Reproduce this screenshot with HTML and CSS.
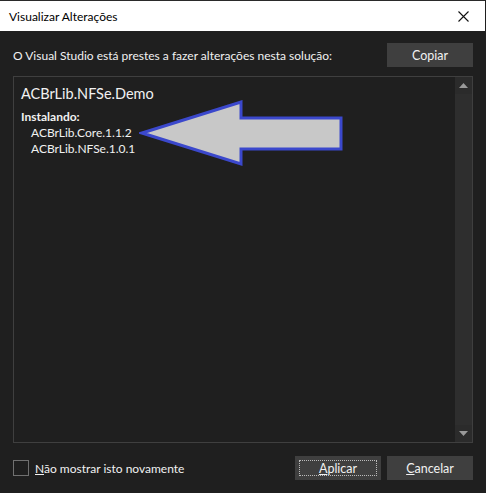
FILE: index.html
```html
<!DOCTYPE html>
<html>
<head>
<meta charset="utf-8">
<link rel="stylesheet" href="styles.css">
</head>
<body>
<div class="window">
  <div class="titlebar">
    <span class="title">Visualizar Alterações</span>
    <svg class="close" width="11" height="11" viewBox="0 0 11 11"><path d="M0.5 0.5 L10.5 10.5 M10.5 0.5 L0.5 10.5" stroke="#111" stroke-width="1.1" fill="none"/></svg>
  </div>
  <div class="content">
    <div class="header">
      <span class="label">O Visual Studio está prestes a fazer alterações nesta solução:</span>
      <button class="btn">Copiar</button>
    </div>
    <div class="listbox">
      <div class="listtext">
        <div class="project">ACBrLib.NFSe.Demo</div>
        <div class="section">Instalando:</div>
        <div class="item">ACBrLib.Core.1.1.2</div>
        <div class="item">ACBrLib.NFSe.1.0.1</div>
      </div>
      <div class="scrollbar">
        <div class="sbtn"><svg width="9" height="5" viewBox="0 0 9 5"><path d="M0 5 L4.5 0 L9 5 Z" fill="#999"/></svg></div>
        <div class="track"></div>
        <div class="sbtn"><svg width="9" height="5" viewBox="0 0 9 5"><path d="M0 0 L9 0 L4.5 5 Z" fill="#999"/></svg></div>
      </div>
      <svg class="arrow" width="206" height="68" viewBox="0 0 206 68">
        <polygon points="3,33 102,2 102,18 202,18 202,49 102,49 102,64" fill="#c8c8c8" stroke="#3b48cc" stroke-width="3" stroke-linejoin="miter"/>
      </svg>
    </div>
    <div class="footer">
      <label class="check"><span class="box"></span><span><u>N</u>ão mostrar isto novamente</span></label>
      <div class="buttons">
        <button class="btn focused"><span class="focusring"><u>A</u>plicar</span></button>
        <button class="btn"><u>C</u>ancelar</button>
      </div>
    </div>
  </div>
</div>
</body>
</html>
```

FILE: styles.css
```css
html, body {
  margin: 0;
  padding: 0;
  background: #1f1f1f;
}
body {
  width: 486px;
  height: 493px;
  overflow: hidden;
  font-family: "Lato", "Noto Sans", sans-serif;
  font-size: 12px;
  color: #f1f1f1;
}
.window {
  width: 485px;
  height: 493px;
  border-top: 1px solid #2a2a2a;
  box-sizing: border-box;
  display: flex;
  flex-direction: column;
}
.titlebar {
  height: 30px;
  background: #ffffff;
  color: #000;
  display: flex;
  align-items: center;
  justify-content: space-between;
  padding: 0 16px 0 9px;
  flex: none;
}
.title {
  font-size: 12px;
}
.close {
  display: block;
}
.content {
  flex: 1;
  display: flex;
  flex-direction: column;
  padding: 12px 12px 0 13px;
}
.header {
  display: flex;
  align-items: center;
  justify-content: space-between;
  height: 24px;
}
.label {
  font-size: 12px;
}
.btn {
  width: 86px;
  height: 24px;
  background: #3f3f3f;
  border: none;
  color: #f1f1f1;
  font-family: inherit;
  font-size: 12.5px;
  padding: 0;
  display: flex;
  align-items: center;
  justify-content: center;
}
.listbox {
  margin-top: 9px;
  height: 367px;
  border: 1px solid #3f3f3f;
  box-sizing: border-box;
  display: flex;
  position: relative;
}
.listtext {
  flex: 1;
  padding: 7px 0 0 7px;
}
.project {
  font-size: 14.5px;
  line-height: 20px;
}
.section {
  font-weight: bold;
  margin-top: 5px;
  font-size: 12px;
  line-height: 16px;
}
.item {
  padding-left: 10px;
  font-size: 12px;
  line-height: 15.5px;
}
.scrollbar {
  width: 17px;
  background: #2e2e2e;
  display: flex;
  flex-direction: column;
}
.sbtn {
  height: 17px;
  display: flex;
  align-items: center;
  justify-content: center;
  background: #2b2b2b;
}
.track {
  flex: 1;
}
.arrow {
  position: absolute;
  left: 125px;
  top: 23px;
}
.footer {
  margin-top: 13px;
  display: flex;
  justify-content: space-between;
  align-items: center;
  height: 24px;
}
.check {
  display: flex;
  align-items: center;
  gap: 6px;
  font-size: 12px;
}
.box {
  width: 14px;
  height: 14px;
  border: 1px solid #707070;
  display: block;
}
.buttons {
  display: flex;
  gap: 6px;
}
.focusring {
  border: 1px dotted #bbbbbb;
  width: 76px;
  height: 14px;
  display: flex;
  align-items: center;
  justify-content: center;
}
```
